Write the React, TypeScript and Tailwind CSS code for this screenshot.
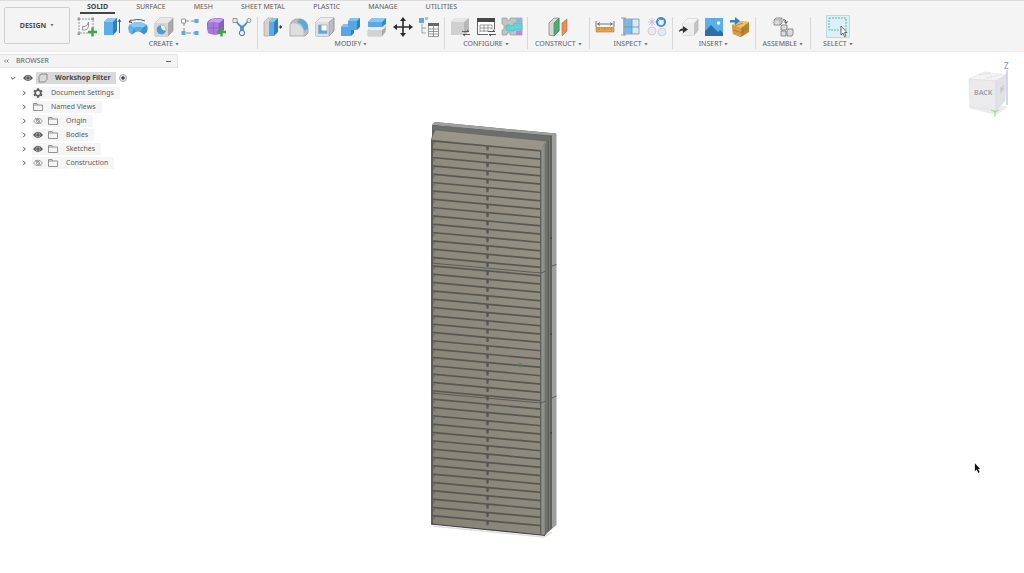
import { useState } from 'react';
import type { ReactNode } from 'react';

const tabs = ['SOLID', 'SURFACE', 'MESH', 'SHEET METAL', 'PLASTIC', 'MANAGE', 'UTILITIES'];

const GREY = '#7b7f83';
const BLUE = '#5aa9e6';
const DARK_BLUE = '#2f7fc1';

// every toolbar icon is drawn on a 20x20 grid
const icons: Record<string, ReactNode> = {
  sketch: (
    <>
      <path d="M3 2h14v14H3z" fill="none" stroke={GREY} strokeWidth=".8" strokeDasharray="2 1" />
      <path d="M6.500 13V9.500H9q3-1 3.500-4.500v4.500q-.5 3-3.500 3.500z" fill="none" stroke={GREY} strokeWidth=".8" />
      <path d="M1.500 .5h2.500v2.500h-2.500zM15.500 .5h2.500v2.500h-2.500zM1.500 15.500h2.500v2.500h-2.500z" fill="#999" />
      <path d="M16.500 10.500v9M12 15h9" stroke="#3fa648" strokeWidth="2.400" />
    </>
  ),
  extrude: (
    <>
      <path d="M2 5l4-4h9v13l-4 4H3q-1 0-1-1z" fill={DARK_BLUE} />
      <path d="M2 5h9v13H3q-1 0-1-1z" fill="#5cace6" />
      <path d="M2 5l4-4h9l-4 4z" fill="#8cc8f0" />
      <path d="M17.500 16V3M16 5l1.500-2.500L19 5" fill="none" stroke="#333" strokeWidth=".8" />
    </>
  ),
  revolve: (
    <>
      <path d="M1 8Q10 2 19 8q1.500 3 0 7l-3 2.500-3.500-2.500q-2.500-1.500-5 0L4 17.500 1 15q-1.500-4 0-7z" fill="#3f92d2" />
      <path d="M1 8Q10 2 19 8l-5 3q-4-2-8 0z" fill="#8ac8f1" />
      <path d="M6 11q4-2 8 0l-1.500 4q-2.500-1.500-5 0z" fill="#5aaae4" />
      <path d="M1 8l5 3-2 6.500L1 15z" fill="#62b2ea" />
      <path d="M1 5Q8 .5 17 4M3 2.500L1 5l3 .5" fill="none" stroke="#333" strokeWidth=".8" />
    </>
  ),
  hole: (
    <>
      <path d="M1 6l5-5h13v13l-5 5H1z" fill="#aaa" stroke="#999" strokeWidth=".7" />
      <path d="M1 6h13v13H1z" fill="#d6d6d6" />
      <path d="M1 6l5-5h13l-5 5z" fill="#e9e9e9" />
      <circle cx="7.500" cy="12.500" r="4.500" fill="#f6f6f6" stroke="#888" strokeWidth=".6" />
      <path d="M7 8.500a4.300 4.300 0 1 0 4.500 5Q7 14 7 8.500z" fill="#479bd9" />
    </>
  ),
  pattern: (
    <>
      <path d="M4 4h13M4 4v12h13" fill="none" stroke={GREY} strokeWidth=".9" strokeDasharray="5 2" />
      <path d="M1.500 2h4v4h-4z" fill="#fff" stroke={GREY} strokeWidth=".8" />
      <path d="M14.500 2h4v4h-4zM1.500 14h4v4h-4zM14.500 14h4v4h-4z" fill={BLUE} />
    </>
  ),
  form: (
    <>
      <path d="M1 7q0-3 4-5 7-2 13 0v11l-4 4q-6 2-12-1-1-4-1-9z" fill="#8e5cc4" />
      <path d="M2 6q7-3 11 0v11q-6 1-11-1z" fill="#a97add" />
      <path d="M2 6q2-4 6-4.500 6-.5 9.500 1L13 6Q8 4 2 6z" fill="#c7a1ee" />
      <path d="M7.500 5v12M1.500 11h12M13 6v11M17 3v10" stroke="#8a58bd" strokeWidth=".6" fill="none" />
      <path d="M15.500 10.500v9M11 15h9" stroke="#3fa648" strokeWidth="2.400" />
    </>
  ),
  derive: (
    <>
      <path d="M3 3l6 7v6M17 3l-6 7v6M6 7l4 3 4-3" fill="none" stroke="#4c92c9" strokeWidth="1.800" />
      <path d="M1 1.500h4v4H1z" fill="#eee" stroke={GREY} strokeWidth=".8" />
      <circle cx="17" cy="3.500" r="2" fill="#eee" stroke={GREY} strokeWidth=".8" />
      <circle cx="10" cy="16" r="2.700" fill="#eee" stroke="#54759a" />
    </>
  ),
  presspull: (
    <>
      <path d="M1 5l4-4h5v14l-4 4H1z" fill="#d3d3d3" stroke="#999" strokeWidth=".6" />
      <path d="M6 5l4-4h5v14l-4 4H6z" fill="#317fbe" />
      <path d="M6 5h5v14H6z" fill="#5babe6" />
      <path d="M6 5l4-4h5l-4 4z" fill="#8ac7f0" />
      <path d="M15.500 10h3M17 8.500l2 1.500-2 1.500z" fill="#333" stroke="#333" strokeWidth=".6" />
    </>
  ),
  fillet: (
    <>
      <path d="M1 18V8q0-3 5-6h5q8 1 8 10v4l-3 3H1z" fill="#bdbdbd" stroke="#999" strokeWidth=".7" />
      <path d="M1.500 18.500V7q8-3 13 6v5.500z" fill="#dedede" />
      <path d="M8 5l3-3.500q8 2 8 10l-4 2.500Q14 7 8 5z" fill="#5aa9e6" />
    </>
  ),
  shell: (
    <>
      <path d="M1 5l4-4h14v13l-5 5H1z" fill="#bcbcbc" stroke="#888" strokeWidth=".8" />
      <path d="M1 5h13v14H1z" fill="#e0e0e0" />
      <path d="M1 5l4-4h14l-5 4z" fill="#ececec" />
      <path d="M3.500 8h8.500v8.500H3.500z" fill="#fff" stroke="#888" strokeWidth=".5" />
      <path d="M3.500 8h3v5.500H12v3H3.500z" fill={BLUE} />
      <path d="M14 5l5-4M14 5v14" stroke="#999" strokeWidth=".6" />
    </>
  ),
  combine: (
    <>
      <path d="M0 10l3-3h4V4l3-3h9v9l-3 3h-3v3l-3 3H0z" fill="#317fbf" />
      <path d="M0 10h7V4h9v9h-6v6H0z" fill="#56a7e3" />
      <path d="M0 10l3-3h4v3zM7 4l3-3h9l-3 3z" fill="#82c2ed" />
    </>
  ),
  offset: (
    <>
      <path d="M1 13l5-3h13l-1 5-3 4H1z" fill="#aaa" stroke="#999" strokeWidth=".5" />
      <path d="M1 13h14v6H1z" fill="#d2d2d2" />
      <path d="M1 13l4-3h14l-4 3z" fill="#eee" />
      <path d="M1 5l4-4h14v6l-4 3H1z" fill="#3688ca" />
      <path d="M1 5h14v5H1z" fill="#5aa9e6" />
      <path d="M1 5l4-4h14l-4 4z" fill="#89c9f1" />
    </>
  ),
  move: (
    <>
      <path d="M10 3v14M3 10h14" stroke="#2c2c2c" strokeWidth="1.600" />
      <path d="M10 0l3 4H7zM10 20l3-4H7zM0 10l4-3v6zM20 10l-4-3v6z" fill="#2c2c2c" />
    </>
  ),
  params: (
    <>
      <path d="M3 7v9h4M3 11h4" stroke={GREY} strokeWidth=".7" fill="none" />
      <path d="M0 1h5v5H0z" fill={BLUE} />
      <path d="M6 0h3v3H6z" fill="#9ac7e8" />
      <path d="M9.500 6.500h10v13h-10z" fill="#fff" stroke={GREY} strokeWidth=".8" />
      <path d="M9 6h11v3H9z" fill="#666" />
      <path d="M10 12h9M10 14.500h9M10 17h9M14.500 7v12" stroke={GREY} strokeWidth=".8" />
    </>
  ),
  configure: (
    <>
      <path d="M1 5l4-4h14v13l-4 4H1z" fill="#b7b7b7" />
      <path d="M1 5h13v13H1z" fill="#d0d0d0" />
      <path d="M1 5l4-4h14l-5 4z" fill="#e6e6e6" />
      <path d="M12 14.500h7l-2-1.500M20 17.500h-7l2 1.500" fill="none" stroke="#555" strokeWidth=".9" />
    </>
  ),
  table: (
    <>
      <path d="M1.500 1.500h17v16h-17z" fill="#fff" stroke="#555" strokeWidth=".9" />
      <path d="M1 1h18v4H1z" fill="#484848" />
      <path d="M4 8h12M4 11h12M4 14h12M4 8v7M8 8v7M12 8v7M16 8v7" stroke="#777" strokeWidth=".7" fill="none" />
      <path d="M12 12.500h9v7h-9z" fill="#f4f4f4" />
      <path d="M12 14.500h7l-2-1.500M20 17.500h-7l2 1.500" fill="none" stroke="#444" strokeWidth=".9" />
    </>
  ),
  rules: (
    <>
      <path d="M0 1h5v2h3V1h12v17H8v-2H5v2H0v-5l2-1V8L0 7z" fill="#c3c3c3" stroke="#999" strokeWidth=".7" />
      <path d="M4 9q2-3 5 0l3-1V6h8v7h-8v1H6q-3-1-2-5z" fill="#5fd6dc" stroke="#3aa9af" strokeWidth=".5" />
      <path d="M14 1h6v4h-6z" fill="#8ab4ea" />
      <path d="M14 14h6v4h-6z" fill="#b08ce0" />
    </>
  ),
  plane: (
    <>
      <path d="M1 6l5-5 5 0v13l-5 5-5-1z" fill="#d8d8d8" stroke="#888" strokeWidth=".8" />
      <path d="M6 6l5-5v13l-5 5z" fill="#4cac73" stroke="#328352" strokeWidth=".6" />
      <path d="M14 6l5-4v12l-5 5z" fill="#e58d5c" stroke="#c36c3c" strokeWidth=".6" />
    </>
  ),
  measure: (
    <>
      <path d="M1 4v6M19 4v6M2 7h16M5 5.500L3 7l2 1.500M15 5.500L17 7l-2 1.500" fill="none" stroke="#555" strokeWidth=".8" />
      <path d="M1 10.500h18V15H1z" fill="#eaa548" stroke="#b5772c" strokeWidth=".6" />
      <path d="M4 11v2M7 11v1.500M10 11v2M13 11v1.500M16 11v2" stroke="#9a651c" strokeWidth=".6" />
    </>
  ),
  interference: (
    <>
      <path d="M3 2h15v15H3z" fill="#d6e9f7" stroke={GREY} strokeWidth=".7" />
      <path d="M4 2h7v15H4z" fill="#79b9e8" />
      <path d="M3 10h15M11 2v15M0 1h5M0 18h5M3 1v17" stroke="#6390b5" strokeWidth=".8" />
    </>
  ),
  inspectCenter: (
    <>
      <path d="M5 1v8M1 5h8M2 2l6 6M8 2L2 8" stroke="#c4b3e2" strokeWidth=".8" />
      <circle cx="5" cy="14" r="4" fill="#ece9f2" stroke="#bbb" strokeWidth=".6" />
      <circle cx="15" cy="15" r="4" fill="#e3ebf3" stroke="#b5bcc4" strokeWidth=".6" />
      <circle cx="14" cy="5" r="5" fill="#3c8ed1" />
      <circle cx="14" cy="5.500" r="2.800" fill="#dff0fb" />
      <path d="M11.500 2l1.200 2M17 3l-2 1" stroke="#fff" strokeWidth=".8" />
    </>
  ),
  insert: (
    <>
      <path d="M5 6l4-4h11v11l-4 5H5z" fill="#c4c4c4" stroke="#aaa" strokeWidth=".6" />
      <path d="M5 6h11v12H5z" fill="#ececec" />
      <path d="M5 6l4-4h11l-4 4z" fill="#f5f5f5" />
      <path d="M1 15q0-3.500 4-3.500V9l5 3.500-5 3.500v-2.500q-3 0-4 1.500z" fill="#333" />
    </>
  ),
  canvas: (
    <>
      <path d="M1 1h18v18H1z" fill="#5caee8" />
      <circle cx="14.500" cy="6" r="1.800" fill="#fff" />
      <path d="M1 14l6-6 7 7 2-2 3 3v3H1z" fill="#2c6fa6" />
    </>
  ),
  mcmaster: (
    <>
      <path d="M2 8l7-4 10 1v10l-8 5-8-3z" fill="#bc842d" />
      <path d="M2 8l9 3v9l-8-3z" fill="#d5a045" />
      <path d="M2 8l7-4 10 1-8 6z" fill="#eac472" />
      <path d="M5 9l8-3M13 10v8M3 13l8 2.500 8-5" stroke="#a06f26" strokeWidth=".7" fill="none" />
      <path d="M0 3h5V0l5 4-5 4V5.500H0z" fill="#3183c8" />
    </>
  ),
  joint: (
    <>
      <path d="M1 3l2-2h6v5L7 8H1zM8 9l1-1h5v4l-1 1H8zM8 14h5v5H8zM14 14l1-2h5v5l-1 2h-5z" fill="#dcdcdc" stroke="#777" strokeWidth=".8" />
      <path d="M1 3h6v5M9 1L7 3" fill="none" stroke="#888" strokeWidth=".6" />
      <path d="M10 3q3-1 3 2.500M11.500 4.500l1.500 2 1.500-2" fill="none" stroke="#333" strokeWidth=".9" />
    </>
  ),
  select: (
    <>
      <path d="M-1.500 -1.500h23v22h-23z" fill="#dbeff7" stroke="#a6cfdf" strokeWidth=".7" />
      <path d="M1 1h17v12H1z" fill="none" stroke="#6aa694" strokeWidth=".9" strokeDasharray="2 1" />
      <path d="M13 9v9l2-2 1.500 3.500 1.500-.7-1.500-3.300H19z" fill="#fff" stroke="#444" strokeWidth=".8" />
    </>
  ),
};

const groups = [
  { label: 'CREATE', tools: ['sketch', 'extrude', 'revolve', 'hole', 'pattern', 'form', 'derive'] },
  { label: 'MODIFY', tools: ['presspull', 'fillet', 'shell', 'combine', 'offset', 'move', 'params'] },
  { label: 'CONFIGURE', tools: ['configure', 'table', 'rules'] },
  { label: 'CONSTRUCT', tools: ['plane'] },
  { label: 'INSPECT', tools: ['measure', 'interference', 'inspectCenter'] },
  { label: 'INSERT', tools: ['insert', 'canvas', 'mcmaster'] },
  { label: 'ASSEMBLE', tools: ['joint'] },
  { label: 'SELECT', tools: ['select'] },
];

const nodes = [
  { name: 'Document Settings', icon: 'gear' },
  { name: 'Named Views', icon: 'folder' },
  { name: 'Origin', icon: 'folder', visible: false },
  { name: 'Bodies', icon: 'folder', visible: true },
  { name: 'Sketches', icon: 'folder', visible: true },
  { name: 'Construction', icon: 'folder', visible: false },
];

function Caret() {
  return (
    <svg viewBox="0 0 4 3" className="w-1 h-[3px]" aria-hidden="true">
      <path d="M.3 0h3.400L2 2.500z" fill="#777" />
    </svg>
  );
}

function Chevron({ open }: { open?: boolean }) {
  return (
    <svg viewBox="0 0 6 6" className="w-[6px] h-[6px]" fill="none" stroke="#555" aria-hidden="true">
      <path d={open ? 'M.7 2L3 4.300 5.300 2' : 'M2 .7L4.300 3 2 5.300'} />
    </svg>
  );
}

function Eye({ on }: { on: boolean }) {
  if (!on) {
    return (
      <svg viewBox="0 0 10 8" className="w-[10px] h-2" fill="none" stroke="#888" strokeWidth=".8" aria-hidden="true">
        <path d="M.5 4Q5-1.500 9.500 4 5 9.500.5 4zM2 1l6.500 6" />
        <circle cx="5" cy="4" r="1.600" />
      </svg>
    );
  }
  return (
    <svg viewBox="0 0 10 8" className="w-[10px] h-2" aria-hidden="true">
      <path d="M0 4Q5-2.500 10 4 5 10.500 0 4z" fill="#5b5b5b" />
      <circle cx="5" cy="4" r="2.100" fill="none" stroke="#ddd" strokeWidth=".6" />
    </svg>
  );
}

function Folder() {
  return (
    <svg viewBox="0 0 10 8" className="w-[10px] h-2" fill="none" stroke="#888" strokeWidth=".9" aria-hidden="true">
      <path d="M.5 7.500v-7h3.500l1 1.500h4.500v5.500zM.5 2H5" />
    </svg>
  );
}

function Gear() {
  return (
    <svg viewBox="0 0 10 10" className="w-[10px] h-[10px]" fill="none" stroke="#606060" aria-hidden="true">
      <path d="M5 .3v9.400M.9 2.650l8.200 4.700M.9 7.350l8.200-4.700" strokeWidth="2" />
      <circle cx="5" cy="5" r="2.800" fill="#f5f5f5" strokeWidth="1.700" />
    </svg>
  );
}

function Toolbar() {
  const [tab, setTab] = useState('SOLID');

  return (
    <header className="flex h-[52px] bg-[#f4f4f4] border-t border-[#dcdcdc] border-b border-b-[#ebebeb]">
      <div className="pl-1 pt-[6px]">
        <button className="w-[66px] h-[37px] flex items-center justify-center gap-1 rounded-xs border border-[#cfcfcf] font-bold text-[#4a4a4a]">
          DESIGN <Caret />
        </button>
      </div>
      <div>
        <nav className="flex gap-[14px] pl-[10px] h-[13px]">
          {tabs.map((t) => (
            <button
              key={t}
              onClick={() => setTab(t)}
              className={`px-[7px] h-[13px] leading-[12px] border-b-2 whitespace-nowrap ${
                tab === t ? 'font-bold text-[#444] border-[#444]' : 'border-transparent'
              }`}
            >
              {t}
            </button>
          ))}
        </nav>
        <div className="flex pt-[3px] pl-px">
          {groups.map((g) => (
            <section
              key={g.label}
              className={`h-[32px] flex flex-col items-center border-r border-[#d8d8d8] last:border-r-0 ${
                g.tools.length > 1 ? 'px-[5px]' : 'px-[7px] last:px-3'
              }`}
            >
              <div className="flex gap-[6px]">
                {g.tools.map((tool) => (
                  <button key={tool} aria-label={tool} className="w-5 h-5">
                    <svg viewBox="0 0 20 20" className="w-5 h-5 overflow-visible" aria-hidden="true">
                      {icons[tool]}
                    </svg>
                  </button>
                ))}
              </div>
              <button className="mt-[2px] flex items-center gap-[2px] leading-[10px]">
                {g.label} <Caret />
              </button>
            </section>
          ))}
        </div>
      </div>
    </header>
  );
}

function Browser() {
  return (
    <aside className="relative w-[178px] pt-[2px]">
      <div className="h-[14px] flex items-center bg-[#f3f3f3] border border-l-0 border-[#e4e4e4] pl-1 pr-[6px]">
        <button aria-label="Collapse browser">
          <svg viewBox="0 0 5 4" className="w-[5px] h-1" fill="none" stroke="#666" strokeWidth=".8">
            <path d="M2 .5L.5 2 2 3.500M4.500 .5L3 2l1.500 1.500" />
          </svg>
        </button>
        <h2 className="ml-[7px] flex-1">BROWSER</h2>
        <button aria-label="Minimize" className="w-[5px] h-px bg-[#666]" />
      </div>
      <div className="mt-[2px] h-[15px] flex items-center pl-[10px]">
        <button aria-label="Collapse Workshop Filter"><Chevron open /></button>
        <button aria-label="Toggle Workshop Filter" className="ml-[7px]"><Eye on /></button>
        <div className="ml-[3px] h-[12px] flex items-center bg-[#d9d9d9] pl-[2px] pr-[5px]">
          <svg viewBox="0 0 10 10" className="w-[10px] h-[10px]" fill="none" stroke="#777" strokeWidth=".8" aria-hidden="true">
            <path d="M1 3.500L3 1h6v5.500L7 9H1z" />
          </svg>
          <span className="ml-[7px] font-bold text-[#4a4a4a] whitespace-nowrap">Workshop Filter</span>
        </div>
        <label className="pl-[3px] flex">
          <input
            type="radio"
            defaultChecked
            aria-label="Activate component"
            className="appearance-none w-2 h-2 rounded-full border border-[#aaa] bg-[radial-gradient(#445_30%,#e4e4ec_50%)]"
          />
        </label>
      </div>
      <ul className="mt-px">
        {nodes.map((n) => (
          <li key={n.name} className="h-[14px] flex items-center pl-[21px]">
            <button aria-label={`Expand ${n.name}`}><Chevron /></button>
            <div className="ml-[5px] h-[12px] flex items-center bg-[#f5f5f5] pl-[1px] pr-[6px]">
              {n.visible !== undefined && (
                <button aria-label={`Toggle ${n.name}`} className="mr-[5px]"><Eye on={n.visible} /></button>
              )}
              {n.icon === 'gear' ? <Gear /> : <Folder />}
              <span className="ml-2 whitespace-nowrap">{n.name}</span>
            </div>
          </li>
        ))}
      </ul>
    </aside>
  );
}

const SLATS = 46;
const PITCH = 8.33;

function FilterModel() {
  const slats = Array.from({ length: SLATS }, (_, i) => 20 + i * PITCH);

  return (
    <svg viewBox="0 0 130 420" className="absolute top-[68px] left-[42%] w-[130px] h-[420px]" role="img" aria-label="Workshop Filter">
      <defs>
        <linearGradient id="slat" x1="0" x2="1">
          <stop offset="0" stopColor="#8f8b7e" />
          <stop offset="1" stopColor="#969286" />
        </linearGradient>
        <linearGradient id="shade" x1="0" y1="0" x2="0" y2="1">
          <stop offset="0" stopColor="#444" stopOpacity="0" />
          <stop offset="1" stopColor="#4a5048" stopOpacity=".14" />
        </linearGradient>
      </defs>
      <path d="M3 406L114 417l8-5" fill="none" stroke="#dedede" strokeWidth="1.500" />
      <path d="M2 5l3-3 121 11.500V405l-11 10L1 404z" fill="#5f615d" />
      {/* top rim */}
      <path d="M2 5l3-3 121 11.500-5 2z" fill="#9da09d" />
      <path d="M2 5l117 11v5L2 10z" fill="#6c6e6b" />
      {/* side rails */}
      <path d="M122 14l4.500-.3V405l-4.500 3z" fill="#9c9e9b" />
      <path d="M116 20h1.500v391l-1.500 2zM119 17h1v393h-1z" fill="#737571" />
      {/* face */}
      <path d="M5 10l111 11-5 10.500L1 20z" fill="#999588" stroke="#6a6861" strokeWidth=".6" />
      <path d="M1 20l110 10.500V415L1 404z" fill="url(#slat)" />
      {slats.map((y) => (
        <g key={y}>
          <path d={`M2 ${y}l109 10v1.700L2 ${y + 1.7}z`} fill="#595953" />
          <path d={`M2 ${y + 1.7}l4 .4-3 3.600H2z`} fill="#77746a" />
          <path d={`M56 ${y + 6}h3l-.5 4.500h-2z`} fill="#595953" />
        </g>
      ))}
      <path d="M1 20l110 10.500V415L1 404z" fill="url(#shade)" />
      <path d="M1 20h2v385L1 404z" fill="#5c5d57" />
      <path d="M110 30h1.300v385h-1.300z" fill="#5f605a" />
      <path d="M111.300 30.500l4.700-9.500v391l-1.800 3-2.900.2z" fill="#8f928b" />
      <path d="M115.300 24v391" stroke="#5a5c58" strokeWidth=".8" />
      <path d="M1 143l110 10 5-2M122 146l4.500-1.500M1 273l110 10 5-2M122 278l4.500-2" fill="none" stroke="#51514c" strokeWidth=".8" />
      <path d="M1 404l110 11 4 .3" fill="none" stroke="#40423f" strokeWidth="1.200" />
      <path d="M121 117v2M121 213v2M121 312v2" stroke="#333" />
      <circle cx="90" cy="245" r="2" fill="none" stroke="#4f8b57" strokeWidth=".8" />
    </svg>
  );
}

function ViewCube() {
  return (
    <svg viewBox="0 0 50 60" className="absolute top-[8px] right-[9px] w-[50px] h-[60px]" aria-label="View cube" role="img">
      <path d="M3 48l28 7 12-8-20-4z" fill="#ddd" opacity=".6" />
      <path d="M4 19l15-7 22 3-10 6z" fill="#f3f3f3" stroke="#e0e0e0" strokeWidth=".6" />
      <path d="M4 19l27 2v29L5 47z" fill="#ebebed" stroke="#dddddf" strokeWidth=".6" />
      <path d="M31 21l10-6-1 26-9 9z" fill="#e1e2e5" stroke="#d6d6d9" strokeWidth=".6" />
      <path d="M14 15l12-2M22 18l12-3" stroke="#d9d9d9" strokeDasharray="2 1" />
      <text x="9" y="35" className="text-[7px] font-bold" fill="#a4a8af">BACK</text>
      <path d="M36 27v6M38 25v6M36 30l2-2" stroke="#b3b6bd" strokeWidth=".8" />
      <path d="M42 10v35" stroke="#b0a9e2" />
      <text x="39" y="9" className="text-[8px]" fill="#8580d0">Z</text>
      <path d="M30 50v7M26 50l4 2 4-2" stroke="#8fdc96" fill="none" />
    </svg>
  );
}

export default function App() {
  return (
    <div className="min-h-screen flex flex-col bg-white text-[7px] leading-[10px] text-[#5c5c5c] font-['Noto_Sans','Open_Sans',sans-serif]">
      <Toolbar />
      <main className="relative flex-1 min-h-[500px]">
        <FilterModel />
        <ViewCube />
        <Browser />
        <svg viewBox="0 0 8 12" className="absolute left-[95%] top-[411px] ml-px w-[7px] h-[11px]" aria-hidden="true">
          <path d="M1 0v9l2-2 2 4 1.500-1-2-3.500H7z" fill="#111" />
        </svg>
      </main>
    </div>
  );
}
